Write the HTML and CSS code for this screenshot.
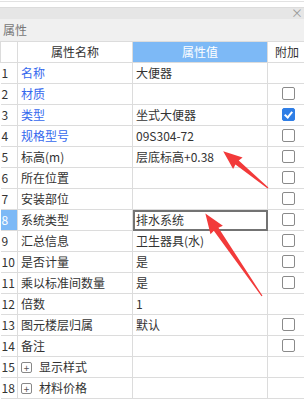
FILE: index.html
```html
<!DOCTYPE html>
<html lang="zh-CN">
<head>
    <meta charset="UTF-8">
    <title>属性</title>
    <link rel="stylesheet" href="styles.css">
</head>
<body>

<div class="panel">
    <div class="topline"></div>
    <div class="titlebar"><span class="close">×</span></div>
    <div class="section-title">属性</div>

    <table class="props">
        <colgroup>
            <col class="c-num">
            <col class="c-name">
            <col class="c-value">
            <col class="c-extra">
        </colgroup>
        <thead>
            <tr>
                <th></th>
                <th>属性名称</th>
                <th class="active">属性值</th>
                <th>附加</th>
            </tr>
        </thead>
        <tbody>
            <tr><td class="num">1</td><td class="name link">名称</td><td>大便器</td><td></td></tr>
            <tr><td class="num">2</td><td class="name link">材质</td><td></td><td><span class="check"></span></td></tr>
            <tr><td class="num">3</td><td class="name link">类型</td><td>坐式大便器</td><td><span class="check on"></span></td></tr>
            <tr><td class="num">4</td><td class="name link">规格型号</td><td>09S304-72</td><td><span class="check"></span></td></tr>
            <tr><td class="num">5</td><td class="name">标高(m)</td><td>层底标高+0.38</td><td><span class="check"></span></td></tr>
            <tr><td class="num">6</td><td class="name">所在位置</td><td></td><td><span class="check"></span></td></tr>
            <tr><td class="num">7</td><td class="name">安装部位</td><td></td><td><span class="check"></span></td></tr>
            <tr><td class="num selected">8</td><td class="name">系统类型</td><td class="editing">排水系统</td><td><span class="check"></span></td></tr>
            <tr><td class="num">9</td><td class="name">汇总信息</td><td>卫生器具(水)</td><td><span class="check"></span></td></tr>
            <tr><td class="num">10</td><td class="name">是否计量</td><td>是</td><td><span class="check"></span></td></tr>
            <tr><td class="num">11</td><td class="name">乘以标准间数量</td><td>是</td><td><span class="check"></span></td></tr>
            <tr><td class="num">12</td><td class="name">倍数</td><td>1</td><td></td></tr>
            <tr><td class="num">13</td><td class="name">图元楼层归属</td><td>默认</td><td><span class="check"></span></td></tr>
            <tr><td class="num">14</td><td class="name">备注</td><td></td><td><span class="check"></span></td></tr>
            <tr><td class="num">15</td><td class="name"><span class="expand">+</span>显示样式</td><td></td><td></td></tr>
            <tr><td class="num">18</td><td class="name"><span class="expand">+</span>材料价格</td><td></td><td></td></tr>
        </tbody>
    </table>

    <!-- annotation arrows drawn over the grid -->
    <svg class="arrows" width="304" height="416" viewBox="0 0 304 416">
        <g fill="#f23a3a">
            <polygon transform="translate(268 188) rotate(-140.6)" points="0,-0.6 40,-2.6 39,-7.5 58,0 39,7.5 40,2.6 0,0.6"/>
            <polygon transform="translate(262 296) rotate(-124.5)" points="0,-0.6 81,-2.8 80,-7.5 100,0 80,7.5 81,2.8 0,0.6"/>
        </g>
    </svg>
</div>

</body>
</html>
```

FILE: styles.css
```css
body {
    margin: 0;
    background-color: #ffffff;
    font-family: "Noto Sans CJK SC", "Noto Sans", sans-serif;
    font-size: 12px;
    color: #333;
}
.panel {
    position: relative;
    width: 304px;
    height: 416px;
    overflow: hidden;
}
.topline {
    height: 5px;
    border-top: 1px solid #e2e2e2;
    margin-top: 1px;
}
.titlebar {
    height: 11px;
    background-color: #e6e6e6;
    border-top: 1px solid #dcdcdc;
    position: relative;
}
.titlebar .close {
    position: absolute;
    right: 1px;
    top: -4px;
    color: #999;
    font-size: 12px;
}
.section-title {
    height: 22px;
    line-height: 22px;
    padding-left: 3px;
    background-color: #f0f0f0;
    color: #777;
    font-size: 12px;
}
.props {
    border-collapse: collapse;
    table-layout: fixed;
    width: 310px;
}
.c-num { width: 17px; }
.c-name { width: 115px; }
.c-value { width: 135px; }
.c-extra { width: 43px; }
.props th,
.props td {
    height: 20px;
    padding: 0;
    border: 1px solid #dcdcdc;
    white-space: nowrap;
    overflow: hidden;
    font-weight: normal;
    line-height: 20px;
}
.props th {
    text-align: center;
    color: #333;
}
.props th:last-child {
    text-align: left;
    padding-left: 7px;
}
.props th.active {
    background-color: #7db9f6;
    color: #ffffff;
}
.props td {
    padding-left: 3px;
}
.props td.num {
    padding-left: 1px;
    border-left: none;
}
.props td.num.selected {
    background-color: #7db9f6;
    color: #ffffff;
}
.props td.link {
    color: #3568ee;
}
.props td.editing {
    outline: 2px solid #737373;
    outline-offset: -2px;
}
.check {
    display: inline-block;
    width: 11px;
    height: 11px;
    margin-left: 11px;
    margin-top: 3px;
    border: 1px solid #8a8a8a;
    border-radius: 2px;
    background-color: #fff;
    vertical-align: top;
    position: relative;
}
.check.on {
    background-color: #2f7ee6;
    border-color: #2f7ee6;
}
.check.on::after {
    content: "";
    position: absolute;
    left: 3px;
    top: 1px;
    width: 3px;
    height: 6px;
    border: solid #fff;
    border-width: 0 2px 2px 0;
    transform: rotate(40deg);
}
.expand {
    display: inline-block;
    width: 9px;
    height: 9px;
    margin-top: 5px;
    margin-right: 7px;
    border: 1px solid #888;
    border-radius: 2px;
    font-size: 10px;
    line-height: 9px;
    text-align: center;
    color: #555;
    vertical-align: top;
}
.arrows {
    position: absolute;
    left: 0;
    top: 0;
    pointer-events: none;
}
```
